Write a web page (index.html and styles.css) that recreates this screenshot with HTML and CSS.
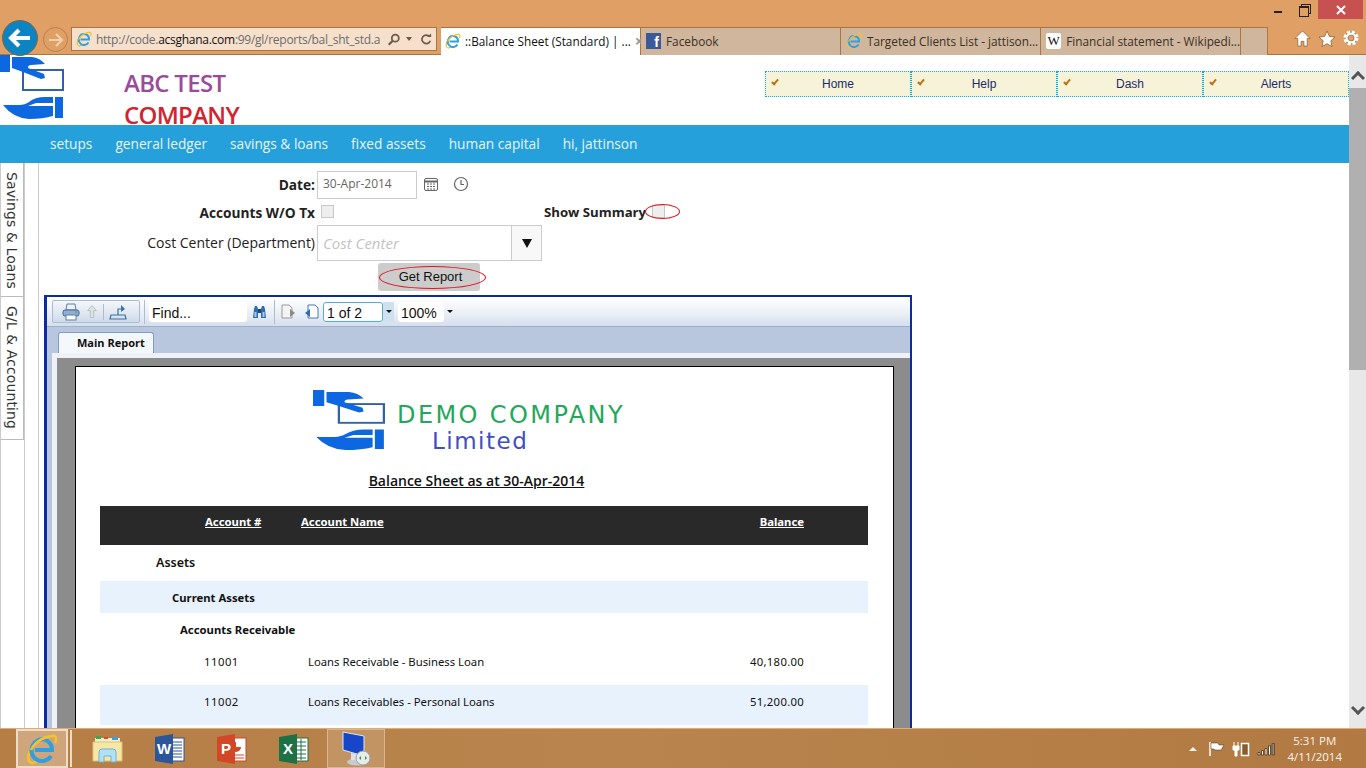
FILE: index.html
```html
<!DOCTYPE html>
<html>
    <head>
        <meta charset="utf-8">
        <title>Balance Sheet (Standard)</title>
        <link rel="stylesheet" href="styles.css">
    </head>
    <body>
        <svg class="defs" width="0" height="0">
            <symbol id="ie" viewBox="0 0 32 32">
                <path d="M26 3c4-1 5 2 3 7M6 14C1 22 1 29 6 30c3 0 6-2 8-3" fill="none" stroke="#f5c22c" stroke-width="2.500"/>
                <path d="M9 17h17a10 10 0 0 0-19-5M7 12a10 10 0 0 0 18 11" fill="none" stroke="#2f9fdf" stroke-width="4"/>
                <path d="M5 17C9 9 19 2 29 3" fill="none" stroke="#f5c22c" stroke-width="2.500"/>
            </symbol>
            <symbol id="hands" viewBox="0 0 64 64" preserveAspectRatio="none">
                <rect x="23" y="15" width="40" height="20" fill="#fff" stroke="#2f62a8" stroke-width="2"/>
                <path d="M0 0h10v17H0zM12 2h20q8 1 13 7l-14 1q-3 0-3 3l16 6 1 4-4 1-18-7-11-4z" fill="#0d67e0"/>
                <path d="M3 50h16q6 0 10-3 6-5 16-5h8v6H36l-8 3h25v10q-10 3-24 3-16-1-26-14zM55 42h8v21h-8z" fill="#0d67e0"/>
            </symbol>
        </svg>

        <div class="titlebar">
            <span class="win-btn min"></span>
            <span class="win-btn restore"></span>
            <span class="win-btn close">
                <svg width="10" height="10" viewBox="0 0 10 10"><path d="M1 1l8 8M9 1L1 9" stroke="#fff" stroke-width="2"/></svg>
            </span>
        </div>

        <div class="browserbar">
            <span class="back">
                <svg width="24" height="22" viewBox="0 0 24 22"><path d="M11 3 3 11l8 8M3 11h19" fill="none" stroke="#fff" stroke-width="4"/></svg>
            </span>
            <span class="forward">
                <svg width="16" height="14" viewBox="0 0 16 14"><path d="M8 1l6 6-6 6M14 7H1" fill="none" stroke="#f0d2b0" stroke-width="2"/></svg>
            </span>
            <div class="address">
                <svg class="fav" width="16" height="16"><use href="#ie"/></svg>
                <span class="url">http://code.<b>acsghana.com</b>:99/gl/reports/bal_sht_std.a</span>
                <svg class="search" width="14" height="13" viewBox="0 0 16 14"><circle cx="9.500" cy="5.500" r="4" fill="none" stroke="#6b5a48" stroke-width="2"/><path d="M6.500 8.500 2 13" stroke="#6b5a48" stroke-width="2.500"/></svg>
                <span class="caret"></span>
                <svg class="refresh" width="12" height="13" viewBox="0 0 14 14"><path d="M11 3.500a5 5 0 1 0 1 5" fill="none" stroke="#6b5a48" stroke-width="2"/><path d="M8 4h5V0z" fill="#6b5a48"/></svg>
            </div>
            <div class="tabs">
                <div class="tab active">
                    <svg width="16" height="16"><use href="#ie"/></svg>
                    <span class="tab-text">::Balance Sheet (Standard) | ...</span>
                    <span class="tab-x">×</span>
                </div>
                <div class="tab">
                    <span class="fb">f</span>
                    <span class="tab-text">Facebook</span>
                </div>
                <div class="tab">
                    <svg width="16" height="16"><use href="#ie"/></svg>
                    <span class="tab-text">Targeted Clients List - jattison...</span>
                </div>
                <div class="tab">
                    <span class="wiki">W</span>
                    <span class="tab-text">Financial statement - Wikipedi...</span>
                </div>
                <div class="tab stub"></div>
            </div>
            <div class="tools">
                <svg width="17" height="17" viewBox="0 0 18 18"><path d="M9 1 1 9h3v8h3.500v-5h3v5H14V9h3z" fill="#fff" stroke="#8a6238" stroke-width=".8"/></svg>
                <svg width="18" height="18" viewBox="0 0 18 18"><path d="M9 1l2.400 5.400 5.600.6-4.200 3.800 1.200 5.800L9 13.700 4 16.600l1.200-5.800L1 7l5.600-.6z" fill="#fff" stroke="#8a6238" stroke-width=".8"/></svg>
                <svg width="16" height="16" viewBox="0 0 18 18"><circle cx="9" cy="9" r="5" fill="none" stroke="#8a6238" stroke-width="4"/><circle cx="9" cy="9" r="5" fill="none" stroke="#fff" stroke-width="2.500"/><circle cx="9" cy="9" r="7" fill="none" stroke="#fff" stroke-width="3" stroke-dasharray="3.500 2"/></svg>
            </div>
        </div>

        <div class="window">
            <div class="content">
                <div class="site-head">
                    <svg class="site-logo" width="64" height="64"><use href="#hands"/></svg>
                    <div class="company"><span class="abc">ABC TEST</span> <span class="co">COMPANY</span></div>
                    <div class="quick-menu">
                        <a class="quick"><i></i>Home</a>
                        <a class="quick"><i></i>Help</a>
                        <a class="quick"><i></i>Dash</a>
                        <a class="quick"><i></i>Alerts</a>
                    </div>
                </div>

                <div class="main-nav">
                    <a>setups</a>
                    <a>general ledger</a>
                    <a>savings &amp; loans</a>
                    <a>fixed assets</a>
                    <a>human capital</a>
                    <a>hi, jattinson</a>
                </div>

                <div class="work">
                    <div class="side-tabs">
                        <div class="side-tab first">Savings &amp; Loans</div>
                        <div class="side-tab">G/L &amp; Accounting</div>
                    </div>
                    <div class="form-area">
                        <div class="row row-date">
                            <label class="lbl strong">Date:</label>
                            <span class="text-input date">30-Apr-2014</span>
                            <svg class="cal" width="16" height="16" viewBox="0 0 16 16"><rect x="1.500" y="2.500" width="13" height="12" rx="1.500" fill="none" stroke="#666"/><path d="M1.500 5.500h13" stroke="#666" stroke-width="2"/><path d="M4 8h8M4 10.500h8M4 13h8" stroke="#666" stroke-dasharray="2 1"/></svg>
                            <svg class="clock" width="16" height="16" viewBox="0 0 16 16"><circle cx="8" cy="8" r="6.500" fill="none" stroke="#666" stroke-width="1.200"/><path d="M8 4v4.500h3" fill="none" stroke="#666" stroke-width="1.200"/></svg>
                        </div>
                        <div class="row row-check">
                            <label class="lbl strong">Accounts W/O Tx</label>
                            <span class="check"></span>
                            <label class="strong summary">Show Summary</label>
                            <span class="check check-sum"></span>
                            <span class="ring ring-sum"></span>
                        </div>
                        <div class="row row-cost">
                            <label class="lbl">Cost Center (Department)</label>
                            <div class="combo">
                                <span class="placeholder">Cost Center</span>
                                <span class="combo-btn"></span>
                            </div>
                        </div>
                        <div class="row row-btn">
                            <button class="get-report">Get Report<span class="ring ring-btn"></span></button>
                        </div>

                        <div class="viewer">
                            <div class="viewer-bar">
                                <div class="btn-group">
                                    <svg width="20" height="18" viewBox="0 0 20 18"><path d="M6 1h8l1 6H5z" fill="#eef2f8" stroke="#5a7ea8"/><rect x="2" y="7" width="16" height="6" rx="2" fill="#8fb0d4" stroke="#46688f"/><rect x="5" y="12" width="10" height="5" fill="#fff" stroke="#5a7ea8"/><path d="M14 9h2" stroke="#3fa650"/></svg>
                                    <svg width="12" height="15" viewBox="0 0 14 16"><path d="M7 1l5 6H9v8H5V7H2z" fill="#dfe2e6" stroke="#b4b9be"/></svg>
                                    <span class="vsep"></span>
                                    <svg width="18" height="16" viewBox="0 0 18 16"><path d="M2 11h14l1 4H1zM9 11V5h4" fill="none" stroke="#3c6ea8" stroke-width="1.200"/><path d="M12 1l4 4-4 3z" fill="#3c6ea8"/></svg>
                                </div>
                                <span class="vsep tall first-sep"></span>
                                <span class="bar-input find">Find...</span>
                                <svg class="binoc" width="15" height="14" viewBox="0 0 15 14"><path d="M1 13l1-9 1-3h2l1 3v9zM14 13l-1-9-1-3h-2L9 4v9z" fill="#2f6db0"/><path d="M6 4h3v4H6z" fill="#1b4478"/><path d="M2.500 7h2v5h-2zM10.500 7h2v5h-2z" fill="#a9cbee"/></svg>
                                <span class="vsep tall"></span>
                                <svg class="doc" width="15" height="15" viewBox="0 0 15 15"><path d="M1 1h7l3 3v10H1z" fill="#f4f4f4" stroke="#9a9a9a"/><path d="M9 5l5 4-5 4z" fill="#8a8a8a"/></svg>
                                <svg class="doc2" width="15" height="15" viewBox="0 0 15 15"><path d="M4 1h7l3 3v10H4z" fill="#fff" stroke="#4a78b0"/><path d="M6 5L1 9l5 4z" fill="#2f6db0"/></svg>
                                <span class="bar-input page-no">1 of 2</span>
                                <span class="drop"></span>
                                <span class="bar-input zoom">100%</span>
                                <span class="drop plain"></span>
                            </div>
                            <div class="viewer-tabs">
                                <span class="main-report">Main Report</span>
                            </div>
                            <div class="viewer-rim">
                                <div class="viewer-gray">
                                    <div class="sheet">
                                        <div class="sheet-logo">
                                            <svg class="sheet-mark" width="72" height="60"><use href="#hands" width="72" height="60"/></svg>
                                            <div class="demo-name">
                                                <div class="demo">DEMO COMPANY</div>
                                                <div class="limited">Limited</div>
                                            </div>
                                        </div>
                                        <h2 class="sheet-title">Balance Sheet as at 30-Apr-2014</h2>
                                        <table class="report">
                                            <tr class="head">
                                                <th class="c-no">Account #</th>
                                                <th class="c-name">Account Name</th>
                                                <th class="c-bal">Balance</th>
                                            </tr>
                                            <tr class="r-assets"><td colspan="3" class="assets">Assets</td></tr>
                                            <tr class="r-current shade"><td colspan="3" class="current">Current Assets</td></tr>
                                            <tr class="r-group"><td colspan="3" class="group">Accounts Receivable</td></tr>
                                            <tr class="line">
                                                <td class="no">11001</td>
                                                <td class="name">Loans Receivable - Business Loan</td>
                                                <td class="bal">40,180.00</td>
                                            </tr>
                                            <tr class="line shade">
                                                <td class="no">11002</td>
                                                <td class="name">Loans Receivables - Personal Loans</td>
                                                <td class="bal">51,200.00</td>
                                            </tr>
                                        </table>
                                    </div>
                                </div>
                            </div>
                        </div>
                    </div>
                </div>
            </div>
            <div class="vscroll">
                <span class="arrow up"></span>
                <span class="thumb"></span>
                <span class="arrow down"></span>
            </div>
        </div>

        <div class="taskbar">
            <div class="task task-ie"><svg width="32" height="32"><use href="#ie"/></svg></div>
            <div class="task">
                <svg width="32" height="32" viewBox="0 0 32 32"><path d="M3 5h25v7H3z" fill="#f6eec8"/><path d="M4 3h5v3H4z" fill="#3fa650"/><path d="M12 4h4v2h-4z" fill="#d04c3c"/><path d="M20 4h6v3h-6z" fill="#3f9fdc"/><path d="M1 9h29v19H1z" fill="#f8e6a4" stroke="#dcc078"/><path d="M7 29V19q0-3 3-3h11q3 0 3 3v10h-5v-6h-7v6z" fill="#b4e0f4" stroke="#6ab4dc"/></svg>
            </div>
            <div class="task">
                <svg width="32" height="32" viewBox="0 0 32 32"><rect x="15" y="5" width="15" height="23" fill="#fff" stroke="#2b579a"/><path d="M18 9h10M18 12h10M18 15h10M18 18h10M18 21h10M18 24h10" stroke="#2b579a"/><path d="M1 4l18-3v30L1 28z" fill="#2b579a"/><text class="ms-letter" x="3" y="21">W</text></svg>
            </div>
            <div class="task">
                <svg width="32" height="32" viewBox="0 0 32 32"><rect x="15" y="5" width="15" height="23" fill="#fff" stroke="#d24726"/><path d="M20 9a5 5 0 1 0 5 5h-5z" fill="#d24726"/><path d="M19 22h9M19 25h9" stroke="#d24726"/><path d="M1 4l18-3v30L1 28z" fill="#d24726"/><text class="ms-letter" x="5" y="21">P</text></svg>
            </div>
            <div class="task">
                <svg width="32" height="32" viewBox="0 0 32 32"><rect x="15" y="5" width="15" height="23" fill="#fff" stroke="#1e7145"/><path d="M18 9h10M18 13h10M18 17h10M18 21h10M18 25h10M23 6v21" stroke="#1e7145"/><path d="M1 4l18-3v30L1 28z" fill="#1e7145"/><text class="ms-letter" x="5" y="21">X</text></svg>
            </div>
            <div class="task task-rdp">
                <svg width="34" height="36" viewBox="0 0 34 36"><ellipse cx="18" cy="31" rx="10" ry="3.500" fill="#c8ccd0"/><path d="M4 1l21 4v20L4 19z" fill="#1846c8" stroke="#dfe6f0"/><path d="M12 22v7h9v-5z" fill="#dfe3e8"/><circle cx="24" cy="27" r="7" fill="#e8ece8" stroke="#9aa0a0"/><path d="M20 27l2-2v4zM28 27l-2-2v4z" fill="#2c9a4a"/></svg>
            </div>
            <div class="tray">
                <span class="tray-up"></span>
                <svg width="18" height="16" viewBox="0 0 18 16"><path d="M3 1v14" stroke="#fff" stroke-width="1.500"/><path d="M4 2h7l1 2h5l-3 5H8L7 8H4z" fill="#fff" stroke="#4a2e10" stroke-width=".5"/></svg>
                <svg width="18" height="16" viewBox="0 0 18 16"><path d="M1 5h6v4H5v6H3V9H1zM2 1v4M6 1v4" fill="#fff" stroke="#fff"/><rect x="9.500" y="2.500" width="7" height="12" fill="#8a5c2c" stroke="#fff" stroke-width="1.500"/></svg>
                <svg width="18" height="14" viewBox="0 0 18 14"><path d="M1 10.500h2V13H1zM4.500 8.500h2V13h-2zM8 6.500h2V13H8zM11.500 4h2v9h-2z" fill="#fff" stroke="#4a2e10" stroke-width=".8"/><path d="M15 1.500h2.500V13H15z" fill="#8a8a8a" stroke="#4a2e10" stroke-width=".6"/></svg>
                <div class="clock-text">
                    <span>5:31 PM</span>
                    <span>4/11/2014</span>
                </div>
            </div>
        </div>
    </body>
</html>
```

FILE: styles.css
```css
* {
    padding: 0;
    margin: 0;
    box-sizing: border-box;
}

html, body {
    width: 1366px;
    height: 768px;
    overflow: hidden;
}

body {
    display: flex;
    flex-direction: column;
    background-color: #fff;
    font-family: "Open Sans", sans-serif;
}

.defs {
    position: absolute;
}

/* window chrome */
.titlebar {
    height: 27px;
    flex: none;
    display: flex;
    justify-content: flex-end;
    padding-right: 3px;
    background-color: #e0a065;
}

.win-btn {
    display: block;
    height: 19px;
    position: relative;
}

.min {
    width: 27px;
}

.min::after {
    content: '';
    position: absolute;
    left: 10px;
    top: 11px;
    width: 8px;
    height: 2px;
    background-color: #222;
}

.restore {
    width: 27px;
}

.restore::before {
    content: '';
    position: absolute;
    left: 10px;
    top: 4px;
    width: 8px;
    height: 8px;
    border: 1px solid #222;
}

.restore::after {
    content: '';
    position: absolute;
    left: 8px;
    top: 6px;
    width: 8px;
    height: 8px;
    border: 1px solid #222;
    border-top-width: 2px;
    background-color: #e0a065;
}

.close {
    width: 45px;
    display: flex;
    align-items: center;
    justify-content: center;
    background-color: #c75050;
}

.browserbar {
    height: 28px;
    flex: none;
    display: flex;
    position: relative;
    background-color: #e0a065;
    border-bottom: 1px solid #a9763f;
}

.back {
    position: absolute;
    left: 2px;
    top: -7px;
    width: 36px;
    height: 36px;
    display: flex;
    align-items: center;
    justify-content: center;
    border-radius: 50%;
    background-color: #0b84c4;
    border: 1px solid #8a6238;
    z-index: 2;
}

.forward {
    position: absolute;
    left: 43px;
    top: 0;
    width: 25px;
    height: 25px;
    display: flex;
    align-items: center;
    justify-content: center;
    border-radius: 50%;
    border: 1px solid #b5814d;
}

.address {
    width: 366px;
    height: 24px;
    margin-left: 71px;
    padding: 0 4px;
    display: flex;
    align-items: center;
    gap: 4px;
    background-color: #f6e0cc;
    border: 1px solid #a9763f;
    font-size: 12px;
    letter-spacing: -0.270px;
    color: #6c6c6c;
}

.address svg {
    flex: none;
}

.url {
    white-space: nowrap;
    overflow: hidden;
    width: 287px;
    flex: none;
}

.url b {
    font-weight: 400;
    color: #111;
}

.caret {
    width: 0;
    height: 0;
    flex: none;
    margin: 3px 4px 0 1px;
    border: 3px solid transparent;
    border-top: 4px solid #6b5a48;
}

.tabs {
    display: flex;
    margin-left: 4px;
    border-top: 1px solid #a9763f;
}

.tab {
    width: 200px;
    height: 27px;
    display: flex;
    align-items: center;
    gap: 5px;
    padding: 0 0 2px 5px;
    background-color: #d0b69c;
    border-right: 1px solid #a9763f;
    font-size: 11.800px;
    color: #3a3026;
    white-space: nowrap;
}

.tab svg {
    flex: none;
}

.tab.active {
    gap: 4px;
    padding-left: 4px;
    background-color: #fff;
    color: #111;
}

.tab.stub {
    width: 27px;
}

.tab-text {
    flex: 1;
}

.tab-x {
    width: 14px;
    margin-right: 3px;
    font-weight: 700;
    font-size: 16px;
    color: #999;
}

.fb {
    width: 15px;
    height: 16px;
    background-color: #3b5998;
    color: #fff;
    font: bold 14px/18px "Liberation Sans", sans-serif;
    text-align: right;
    padding-right: 2px;
}

.wiki {
    width: 16px;
    height: 16px;
    background-color: #fff;
    color: #111;
    font: 13px/16px "Liberation Serif", serif;
    text-align: center;
    border-radius: 2px;
}

.tools {
    margin-left: 26px;
    margin-top: 3px;
    display: flex;
    gap: 7px;
}

/* page + scrollbar */
.window {
    height: 673px;
    flex: none;
    display: flex;
}

.content {
    width: 1349px;
    height: 673px;
    overflow: hidden;
}

.vscroll {
    width: 17px;
    display: flex;
    flex-direction: column;
    align-items: center;
    background-color: #e8e8e8;
}

.thumb {
    width: 17px;
    height: 282px;
    background-color: #b0b0b0;
}

.arrow {
    display: block;
    width: 10px;
    height: 10px;
    border-left: 3px solid #555;
    border-top: 3px solid #555;
}

.arrow.up {
    transform: rotate(45deg);
    margin: 18px 0 5px;
}

.arrow.down {
    transform: rotate(225deg);
    margin-top: 333px;
}

.site-head {
    height: 70px;
    display: flex;
    overflow: hidden;
}

.site-logo {
    flex: none;
}

.company {
    width: 130px;
    margin: 12px 0 0 60px;
    font-size: 24px;
    line-height: 32px;
    font-weight: 600;
    height: 70px;
    letter-spacing: -0.700px;
}

.abc {
    color: #9b4a9c;
}

.co {
    color: #d2232e;
}

.quick-menu {
    display: flex;
    height: 26px;
    margin: 16px 0 0 511px;
    width: 584px;
}

.quick {
    flex: 1;
    display: flex;
    align-items: center;
    justify-content: center;
    position: relative;
    background-color: #f7f3d8;
    border: 1px dotted #00aee8;
    font: 12px "Liberation Sans", sans-serif;
    color: #1a2a6c;
}

.quick i {
    position: absolute;
    left: 7px;
    top: 6px;
    width: 4px;
    height: 7px;
    border-right: 2px solid #c07010;
    border-bottom: 2px solid #c07010;
    transform: rotate(40deg);
}

.main-nav {
    height: 38px;
    display: flex;
    align-items: center;
    gap: 23px;
    padding: 0 0 2px 50px;
    background-color: #26a0da;
    font-size: 13.700px;
    color: #e8f4fb;
}

/* vertical tabs on the left */
.work {
    display: flex;
    height: 565px;
}

.side-tabs {
    width: 39px;
    flex: none;
    border-right: 1px solid #ccc;
    border-left: 1px solid #ccc;
    position: relative;
}

.side-tabs::before {
    content: '';
    position: absolute;
    left: 23px;
    top: 0;
    bottom: 0;
    border-left: 1px solid #ccc;
}

.side-tab {
    writing-mode: vertical-rl;
    width: 23px;
    height: 143px;
    padding-top: 9px;
    border-bottom: 1px solid #bbb;
    border-right: 1px solid #bbb;
    font: 14px/22px "DejaVu Sans", sans-serif;
    letter-spacing: 0.100px;
    color: #333;
    background-color: #fff;
    position: relative;
    z-index: 1;
}

.side-tab.first {
    height: 134px;
}

.form-area {
    flex: 1;
    padding-top: 8px;
    font-size: 14px;
    color: #222;
}

.row {
    display: flex;
    align-items: center;
    position: relative;
}

.row-date {
    height: 28px;
}

.row-date svg {
    margin-bottom: 2px;
}

.row-check {
    height: 16px;
    margin-top: 4px;
}

.row-check label {
    padding-top: 2px;
}

.row-cost {
    height: 36px;
    margin-top: 6px;
}

.row-cost .lbl {
    padding-bottom: 2px;
}

.row-btn {
    height: 28px;
    margin-top: 2px;
}

.lbl {
    width: 276px;
    text-align: right;
    flex: none;
}

.strong {
    font-weight: 700;
    font-size: 13.700px;
}

.row-date .lbl {
    padding-bottom: 2px;
}

.text-input {
    display: block;
    margin-left: 2px;
    border: 1px solid #ccc;
    background-color: #fff;
}

.date {
    width: 100px;
    height: 28px;
    padding-left: 5px;
    line-height: 24px;
    color: #666;
    font-size: 12px;
}

.cal {
    margin-left: 6px;
}

.clock {
    margin-left: 14px;
}

.check {
    width: 13px;
    height: 13px;
    margin-left: 6px;
    background-color: #eee;
    border: 1px solid #c8c8c8;
}

.summary {
    margin-left: 210px;
    font-size: 13.200px;
    white-space: nowrap;
}

.check-sum {
    margin-left: 6px;
}

.ring {
    position: absolute;
    border: 1px solid #e0141e;
    border-radius: 50%;
}

.ring-sum {
    left: 606px;
    top: 1px;
    width: 35px;
    height: 15px;
}

.combo {
    width: 225px;
    height: 36px;
    margin-left: 2px;
    display: flex;
    border: 1px solid #ccc;
}

.placeholder {
    flex: 1;
    padding-left: 5px;
    line-height: 34px;
    font-style: italic;
    font-size: 15px;
    color: #c4c4c4;
}

.combo-btn {
    width: 30px;
    border-left: 1px solid #ccc;
    background-color: #f8f8f8;
    position: relative;
}

.combo-btn::after {
    content: '';
    position: absolute;
    left: 10px;
    top: 13px;
    border: 5px solid transparent;
    border-top: 9px solid #111;
    border-bottom: 0;
}

.get-report {
    width: 102px;
    height: 28px;
    margin-left: 339px;
    padding: 0 0 2px 3px;
    position: relative;
    border: 0;
    border-radius: 3px;
    background-color: #ccc;
    font: 13px "Liberation Sans", sans-serif;
    color: #111;
}

.ring-btn {
    left: 1px;
    top: 3px;
    width: 107px;
    height: 23px;
}

/* report viewer */
.viewer {
    width: 868px;
    margin: 4px 0 0 5px;
    background-color: #b8c7de;
    border: 2px solid #0a2c9c;
    border-left-width: 3px;
    height: 500px;
}

.viewer-bar {
    height: 30px;
    display: flex;
    align-items: center;
    padding-left: 5px;
    background-image: linear-gradient(#fff, #e9eef6 60%, #d5deec);
    border-bottom: 1px solid #9fb0ca;
}

.btn-group {
    width: 88px;
    height: 23px;
    flex: none;
    display: flex;
    align-items: center;
    gap: 5px;
    padding-left: 8px;
    border: 1px solid #a8bcd8;
    border-radius: 2px;
    background-image: linear-gradient(#f4f7fb, #cfdbea);
}

.vsep {
    width: 1px;
    height: 16px;
    background-color: #b0bccc;
}

.vsep.tall {
    height: 24px;
    margin: 0 6px 0 7px;
}

.vsep.first-sep {
    margin: 0 0 0 4px;
}

.bar-input {
    display: block;
    height: 20px;
    background-color: #fff;
    border-radius: 3px;
    padding-left: 3px;
    font: 14px/23px "Liberation Sans", sans-serif;
    color: #111;
}

.find {
    width: 98px;
    margin-left: 4px;
}

.binoc {
    margin-left: 5px;
}

.doc2 {
    margin-left: 8px;
    margin-right: 4px;
}

.page-no {
    width: 60px;
    border: 1px solid #4fb3cf;
    line-height: 21px;
}

.drop {
    width: 11px;
    height: 20px;
    position: relative;
    background-color: #cfe0ee;
}

.drop::after {
    content: '';
    position: absolute;
    left: 3px;
    top: 8px;
    border: 3px solid transparent;
    border-top: 3px solid #111;
}

.drop.plain {
    background-color: transparent;
}

.zoom {
    width: 46px;
    margin-left: 4px;
}

.viewer-tabs {
    height: 26px;
    padding: 5px 0 0 11px;
}

.main-report {
    display: block;
    width: 96px;
    height: 21px;
    padding-left: 18px;
    background-color: #f4f7fb;
    border: 1px solid #7f9dc0;
    border-bottom: 0;
    border-radius: 3px 3px 0 0;
    font: bold 11px/20px "Open Sans", sans-serif;
    color: #111;
}

.viewer-rim {
    margin-left: 5px;
    padding: 5px 0 0 5px;
    background-color: #eef1f7;
    height: 440px;
}

.viewer-gray {
    height: 440px;
    padding: 8px 16px 0 18px;
    background-color: #8c8c8c;
}

.sheet {
    height: 430px;
    background-color: #fff;
    border: 1px solid #000;
    padding: 0 24px;
}

.sheet-logo {
    height: 65px;
    margin: 23px 0 0 213px;
    display: flex;
}

.sheet-mark {
    flex: none;
}

.demo-name {
    margin-left: 12px;
    padding-top: 12px;
    white-space: nowrap;
    font-family: "DejaVu Sans", sans-serif;
}

.demo {
    font-size: 24px;
    line-height: 27px;
    letter-spacing: 2.400px;
    color: #22a85a;
}

.limited {
    margin-left: 35px;
    font-size: 23px;
    line-height: 24px;
    letter-spacing: 1.500px;
    color: #3f4fc4;
}

.sheet-title {
    margin: 16px 16px 0 0;
    font-size: 14px;
    line-height: 20px;
    font-weight: 600;
    text-align: center;
    text-decoration: underline;
    color: #111;
}

.report {
    width: 768px;
    margin-top: 15px;
    border-collapse: collapse;
    table-layout: fixed;
    font-family: "Noto Sans", sans-serif;
    font-size: 11.300px;
    color: #111;
}

.report td, .report th {
    padding: 0;
}

.head {
    height: 39px;
    background-color: #292929;
    color: #fff;
    text-decoration: underline;
}

.head th {
    font-weight: 700;
    padding-bottom: 8px;
}

.c-no {
    width: 201px;
    text-align: left;
    padding-left: 105px !important;
}

.c-name {
    text-align: left;
}

.c-bal, .bal {
    width: 140px;
    text-align: right;
    padding-right: 64px !important;
}

.shade {
    background-color: #e8f2fd;
}

.r-assets {
    height: 36px;
}

.assets {
    padding-left: 56px !important;
    padding-bottom: 2px !important;
    font-size: 12.500px;
    font-weight: 600;
}

.r-current {
    height: 32px;
}

.current {
    padding-left: 72px !important;
    font-weight: 700;
}

.r-group {
    height: 32px;
}

.group {
    padding-left: 80px !important;
    font-weight: 700;
}

.line {
    height: 40px;
}

.line td {
    padding-bottom: 7px;
}

.no {
    padding-left: 104px !important;
    letter-spacing: 0.500px;
}

.bal {
    letter-spacing: 0.300px;
}

.name {
    padding-left: 7px !important;
}

/* taskbar */
.taskbar {
    height: 40px;
    flex: none;
    display: flex;
    align-items: center;
    padding-left: 16px;
    background-image: linear-gradient(90deg, #b67e45, #b9844e 45%, #b27a42);
    border-top: 1px solid #d9ad7c;
}

.task {
    width: 62px;
    height: 39px;
    display: flex;
    align-items: center;
    justify-content: center;
}

.task-ie {
    width: 52px;
    margin-right: 9px;
    background-color: #cfa67c;
    border: 2px solid #ecdcc8;
    box-shadow: 3px 0 0 -1px #b67e45, 5px 0 0 -1px #ecdcc8;
}

.task-rdp {
    width: 58px;
    margin-left: 2px;
    background-color: #c39463;
    border: 1px solid #d9b690;
}

.ms-letter {
    font: bold 15px "Liberation Sans", sans-serif;
    fill: #fff;
}

.tray {
    margin-left: auto;
    display: flex;
    align-items: center;
    gap: 7px;
    padding-right: 24px;
}

.tray-up {
    width: 0;
    height: 0;
    margin-right: 3px;
    border: 4px solid transparent;
    border-bottom: 4px solid #f4f4f4;
    border-top: 0;
}

.clock-text {
    margin-left: 6px;
    display: flex;
    flex-direction: column;
    align-items: center;
    font-size: 11.500px;
    line-height: 16px;
    color: #f8f2ea;
}
```
